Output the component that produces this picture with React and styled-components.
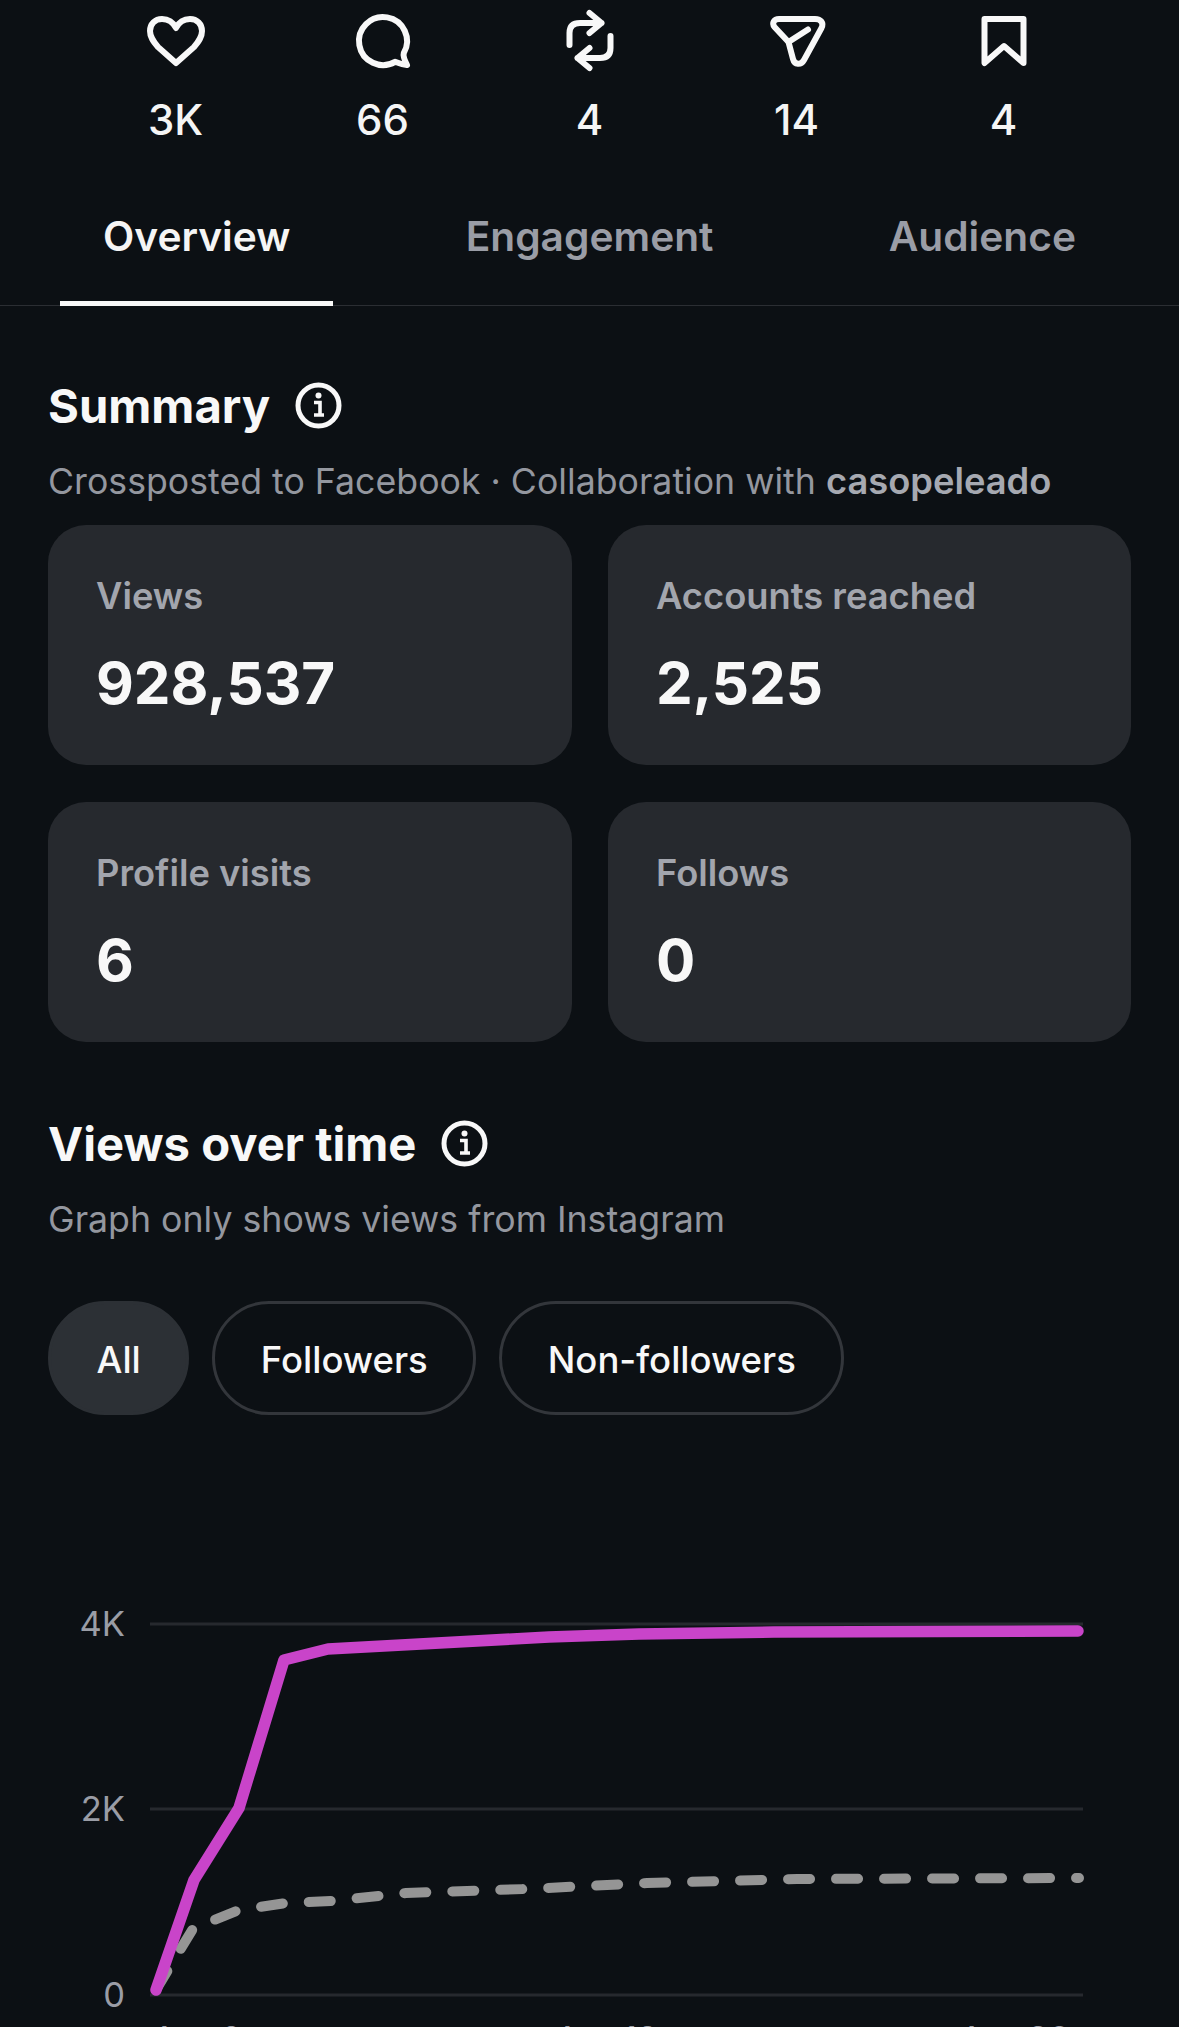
import styled, { createGlobalStyle } from "styled-components";

const GlobalStyle = createGlobalStyle`
  html, body {
    margin: 0;
    background: #0c1014;
  }
  * {
    box-sizing: border-box;
  }
`;

const Page = styled.div`
  width: 1179px;
  height: 2027px;
  overflow: hidden;
  background: #0c1014;
  color: #f5f5f5;
  font-family: Inter, "Liberation Sans", sans-serif;
`;

const StatRow = styled.div`
  display: grid;
  grid-template-columns: repeat(5, 207px);
  padding: 9px 0 0 72px;
`;

const Stat = styled.div`
  display: flex;
  flex-direction: column;
  align-items: center;
`;

const StatIcon = styled.svg`
  display: block;
  width: 64px;
  height: 64px;
  fill: none;
  stroke: #f8f8f8;
  stroke-width: 6;
  stroke-linecap: round;
  stroke-linejoin: round;
`;

const StatValue = styled.div`
  margin-top: 23px;
  font-size: 42px;
  line-height: 48px;
  font-weight: 500;
  color: #f5f5f5;
`;

const TabRow = styled.div`
  display: flex;
  justify-content: space-between;
  margin-top: 25px;
  padding: 0 60px;
  border-bottom: 1px solid #2b2e33;
`;

const Tab = styled.div`
  height: 137px;
  margin-bottom: -1px;
  padding: 44px 43px 0;
  font-size: 40.7px;
  line-height: 48px;
  font-weight: 600;
  color: ${(props) => (props.$active ? "#f5f5f5" : "#9a9da6")};
  border-bottom: 5px solid ${(props) => (props.$active ? "#f8f8f8" : "transparent")};
`;

const Content = styled.div`
  padding: 71px 48px 0;
`;

const SectionHead = styled.div`
  display: flex;
  align-items: center;
  gap: 25px;
  height: 56px;
`;

const Title = styled.h2`
  margin: 0;
  padding-top: 1px;
  font-size: 47.2px;
  line-height: 56px;
  font-weight: 700;
  color: #f8f8f8;
`;

const InfoIcon = styled.svg`
  display: block;
  width: 47px;
  height: 47px;
  flex: none;
`;

const Note = styled.p`
  margin: 25px 0 0;
  font-size: 35.7px;
  line-height: 46px;
  font-weight: 400;
  color: #94979f;

  strong {
    font-size: 36.3px;
    font-weight: 600;
    color: #a6a9b1;
  }
`;

const CardGrid = styled.div`
  display: grid;
  grid-template-columns: 524px 523px;
  grid-auto-rows: 240px;
  column-gap: 36px;
  row-gap: 37px;
  margin-top: 21px;
`;

const Card = styled.div`
  padding: 49px 48px 0;
  background: #26292e;
  border-radius: 38px;
`;

const CardLabel = styled.div`
  font-size: 36.3px;
  line-height: 44px;
  font-weight: 600;
  color: #a2a5ad;
`;

const CardValue = styled.div`
  margin-top: 29px;
  font-size: 58.3px;
  line-height: 72px;
  font-weight: 700;
  color: #f8f8f8;
`;

const SecondSection = styled.div`
  margin-top: 73px;
`;

const PillRow = styled.div`
  display: flex;
  gap: 23px;
  margin-top: 59px;
`;

const Pill = styled.div`
  display: flex;
  align-items: center;
  height: 114px;
  padding: 3px 45.5px 0;
  border: 3px solid ${(props) => (props.$active ? "#2c3035" : "#33363b")};
  border-radius: 57px;
  background: ${(props) => (props.$active ? "#2c3035" : "transparent")};
  font-size: 36.5px;
  font-weight: 500;
  color: #f8f8f8;
`;

const ChartWrap = styled.div`
  margin-top: 145px;
`;

const ChartSvg = styled.svg`
  display: block;
  width: 1179px;
  height: 467px;

  text {
    font-family: Inter, "Liberation Sans", sans-serif;
    font-size: 34.5px;
    fill: #9a9da6;
  }
`;

const stats = [
  {
    value: "3K",
    icon: <path d="M32 19C35 13 40 10 46 10C53 10 58 15 58 22C58 28 55 32 50 38L32 54L14 38C9 32 6 28 6 22C6 15 11 10 18 10C24 10 29 13 32 19Z" />,
  },
  {
    value: "66",
    icon: <path d="M44 52.8A24 24 0 1 1 52.8 44C51.8 47 54 52 56 56C52 55.5 47 54 44 52.8Z" />,
  },
  {
    value: "4",
    icon: (
      <>
        <path d="M31.5 4L43.5 14L31.5 24M43.5 14H22Q11.5 14 11.5 24V36" />
        <path d="M31.5 39L19.5 49L31.5 59M19.5 49H42Q52.5 49 52.5 39V27" />
      </>
    ),
  },
  {
    value: "14",
    icon: (
      <>
        <path d="M14 10H50C56 10 59 14 56.5 19L39 51C36 56.5 29.5 56 28 50L23.5 33L9.5 18C6.5 14 9 10 14 10Z" />
        <path d="M23.5 33L43 20.5" />
      </>
    ),
  },
  {
    value: "4",
    icon: <path d="M12.5 10H51.5V54L32 37L12.5 54Z" />,
  },
];

const tabs = ["Overview", "Engagement", "Audience"];

const cards = [
  { label: "Views", value: "928,537" },
  { label: "Accounts reached", value: "2,525" },
  { label: "Profile visits", value: "6" },
  { label: "Follows", value: "0" },
];

const pills = ["All", "Followers", "Non-followers"];

const gridLines = [
  { label: "4K", y: 1624 },
  { label: "2K", y: 1809 },
  { label: "0", y: 1995 },
];

const allViews = "156,1990 194,1880 239,1808 284,1660 328,1649 549,1637 639,1634 774,1632 1078,1631";
const followerViews = "156,1990 180,1950 194,1927 214,1920 239,1910 286,1903 331,1901 406,1893 526,1889 647,1883 797,1879 1079,1878";

const xLabels = [
  { label: "Apr 6", x: 197 },
  { label: "Apr 19", x: 607 },
  { label: "Apr 30", x: 1015 },
];

const Info = () => (
  <InfoIcon viewBox="0 0 47 47">
    <circle cx="23.5" cy="23.5" r="20.5" fill="none" stroke="#f8f8f8" strokeWidth="5" />
    <circle cx="23.5" cy="13.5" r="3" fill="#f8f8f8" />
    <path d="M19 20.5H25V31.5M19 33H29" fill="none" stroke="#f8f8f8" strokeWidth="3.6" />
  </InfoIcon>
);

const App = () => {
  return (
    <Page>
      <GlobalStyle />
      <StatRow>
        {stats.map((stat, i) => (
          <Stat key={i}>
            <StatIcon viewBox="0 0 64 64">{stat.icon}</StatIcon>
            <StatValue>{stat.value}</StatValue>
          </Stat>
        ))}
      </StatRow>
      <TabRow>
        {tabs.map((tab, i) => (
          <Tab key={tab} $active={i === 0}>
            {tab}
          </Tab>
        ))}
      </TabRow>
      <Content>
        <SectionHead>
          <Title>Summary</Title>
          <Info />
        </SectionHead>
        <Note>
          Crossposted to Facebook · Collaboration with <strong>casopeleado</strong>
        </Note>
        <CardGrid>
          {cards.map((card) => (
            <Card key={card.label}>
              <CardLabel>{card.label}</CardLabel>
              <CardValue>{card.value}</CardValue>
            </Card>
          ))}
        </CardGrid>
        <SecondSection>
          <SectionHead>
            <Title>Views over time</Title>
            <Info />
          </SectionHead>
          <Note>Graph only shows views from Instagram</Note>
        </SecondSection>
        <PillRow>
          {pills.map((pill, i) => (
            <Pill key={pill} $active={i === 0}>
              {pill}
            </Pill>
          ))}
        </PillRow>
      </Content>
      <ChartWrap>
        <ChartSvg viewBox="0 1560 1179 467">
          {gridLines.map((line) => (
            <g key={line.label}>
              <line x1="150" x2="1083" y1={line.y} y2={line.y} stroke="#26292e" strokeWidth="3" />
              <text x="125" y={line.y + 12} textAnchor="end">
                {line.label}
              </text>
            </g>
          ))}
          <polyline
            points={followerViews}
            fill="none"
            stroke="#959595"
            strokeWidth="10"
            strokeDasharray="22 26"
            strokeLinecap="round"
          />
          <polyline
            points={allViews}
            fill="none"
            stroke="#c944c9"
            strokeWidth="11.5"
            strokeLinecap="round"
            strokeLinejoin="round"
          />
          {xLabels.map((item) => (
            <text key={item.label} x={item.x} y="2051" textAnchor="middle">
              {item.label}
            </text>
          ))}
        </ChartSvg>
      </ChartWrap>
    </Page>
  );
};

export default App;
